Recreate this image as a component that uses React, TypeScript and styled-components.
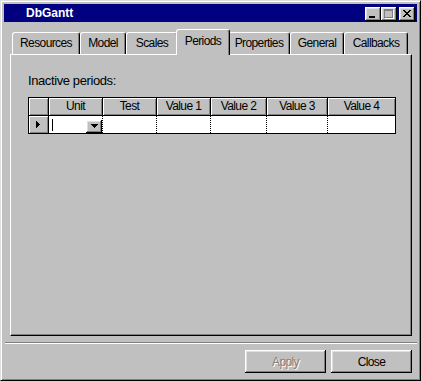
import React from "react";
import styled, { createGlobalStyle } from "styled-components";

const Global = createGlobalStyle`
  html, body { margin: 0; padding: 0; background: #c0c0c0; }
  body { font-family: "Liberation Sans", Arial, sans-serif; font-size: 11px; color: #000; }
  #root { width: 421px; height: 381px; }
`;

const Window = styled.div`
  box-sizing: border-box;
  width: 421px;
  height: 381px;
  background: #c0c0c0;
  border: 1px solid;
  border-color: #dfdfdf #000 #000 #dfdfdf;
  box-shadow: inset 1px 1px #fff, inset -1px -1px #808080;
  padding: 2px;
  display: flex;
  flex-direction: column;
`;

const TitleBar = styled.div`
  height: 18px;
  margin: 1px 1px 0 1px;
  background: #000080;
  display: flex;
  align-items: center;
  padding: 0 2px 0 22px;
`;

const TitleText = styled.div`
  flex: 1;
  color: #fff;
  font-weight: bold;
  font-size: 12px;
  line-height: 18px;
  letter-spacing: 0;
`;

const CaptionButtons = styled.div`
  display: flex;
  margin-top: 2px;
`;

const CaptionButton = styled.div<{ $gap?: boolean }>`
  width: 16px;
  height: 14px;
  margin-left: ${(p) => (p.$gap ? 2 : 0)}px;
  background: #c0c0c0;
  box-shadow: inset -1px -1px #000, inset 1px 1px #fff, inset -2px -2px #808080, inset 2px 2px #dfdfdf;
  display: flex;
  svg { display: block; }
`;

const Body = styled.div`
  margin: 7px 6px 0 7px;
  display: flex;
  flex-direction: column;
`;

const TabRow = styled.div`
  height: 25px;
  display: flex;
  align-items: flex-end;
  padding-left: 2px;
`;

const Tab = styled.div<{ $w: number; $active?: boolean }>`
  box-sizing: border-box;
  width: ${(p) => (p.$active ? p.$w + 4 : p.$w)}px;
  height: ${(p) => (p.$active ? 26 : 22)}px;
  margin: ${(p) => (p.$active ? "0 -2px -1px -2px" : "0")};
  border: 1px solid #fff;
  border-bottom: none;
  border-right-color: #000;
  border-radius: 3px 3px 0 0;
  box-shadow: inset -1px 0 #808080;
  background: #c0c0c0;
  position: relative;
  z-index: ${(p) => (p.$active ? 1 : 0)};
  text-align: center;
  padding-top: ${(p) => (p.$active ? 4 : 3)}px;
  font-size: 12px;
  line-height: 14px;
  letter-spacing: -0.6px;
  white-space: nowrap;
`;

const Panel = styled.div`
  box-sizing: border-box;
  height: 282px;
  border: 1px solid;
  border-color: #fff #000 #000 #fff;
  box-shadow: inset -1px -1px #808080;
  padding: 18px 17px;
  display: flex;
  flex-direction: column;
  align-items: flex-start;
`;

const Label = styled.div`
  font-size: 13px;
  line-height: 15px;
  letter-spacing: -0.4px;
  margin-bottom: 9px;
`;

const cols = "19px 53px 53px 53px 55px 60px 67px";

const Grid = styled.div`
  border: 1px solid #000;
  background: #000;
  display: flex;
  flex-direction: column;
  gap: 1px;
`;

const HeaderRow = styled.div`
  display: grid;
  grid-template-columns: ${cols};
  column-gap: 1px;
  height: 17px;
`;

const HeaderCell = styled.div`
  background: #c0c0c0;
  box-shadow: inset 1px 1px #fff, inset -1px -1px #808080;
  text-align: center;
  font-size: 12px;
  line-height: 16px;
  letter-spacing: -0.6px;
  white-space: nowrap;
`;

const DataRow = styled.div`
  display: grid;
  grid-template-columns: ${cols};
  column-gap: 1px;
  height: 17px;
  background: repeating-linear-gradient(to bottom, #000 0 1px, #fff 1px 2px);
`;

const IndicatorCell = styled.div`
  background: #c0c0c0;
  box-shadow: inset 1px 1px #fff, inset -1px -1px #808080, 1px 0 0 #000;
  display: flex;
  align-items: center;
  justify-content: center;
  padding-right: 1px;
  svg { display: block; }
`;

const EditCell = styled.div`
  background: #fff;
  display: flex;
  align-items: center;
  padding-left: 3px;
`;

const Caret = styled.div`
  width: 1px;
  height: 12px;
  background: #000;
  margin-top: 1px;
`;

const DropButton = styled.div`
  margin-left: auto;
  width: 16px;
  height: 13px;
  margin-top: 3px;
  background: #c0c0c0;
  box-shadow: inset -1px -1px #000, inset 1px 1px #fff, inset -2px -2px #808080, inset 2px 2px #dfdfdf;
  display: flex;
  align-items: center;
  justify-content: center;
  svg { display: block; }
`;

const DataCell = styled.div`
  background: #fff;
`;

const Separator = styled.div`
  height: 0;
  margin: 6px 1px 0 2px;
  border-top: 1px solid #808080;
  border-bottom: 1px solid #fff;
`;

const ButtonBar = styled.div`
  display: flex;
  justify-content: flex-end;
  gap: 5px;
  margin-top: 6px;
  padding-right: 6px;
`;

const PushButton = styled.div<{ $disabled?: boolean }>`
  width: 81px;
  height: 23px;
  background: #c0c0c0;
  box-shadow: inset -1px -1px #000, inset 1px 1px #fff, inset -2px -2px #808080, inset 2px 2px #dfdfdf;
  display: flex;
  align-items: center;
  justify-content: center;
  font-size: 12px;
  letter-spacing: -0.6px;
  color: ${(p) => (p.$disabled ? "#808080" : "#000")};
  text-shadow: ${(p) => (p.$disabled ? "1px 1px 0 #fff" : "none")};
`;

const MinIcon = () => (
  <svg width="16" height="14" shapeRendering="crispEdges">
    <rect x="4" y="9" width="6" height="2" fill="#000" />
  </svg>
);

const MaxIcon = () => (
  <svg width="16" height="14" shapeRendering="crispEdges">
    <path d="M4 3h9v1H4z M4 11h9v1H4z M12 3h1v9h-1z" fill="#fff" />
    <path d="M3 2h9v2H3z M3 10h9v1H3z M3 2h1v9H3z M11 2h1v9h-1z" fill="#808080" />
  </svg>
);

const CloseIcon = () => (
  <svg width="16" height="14" shapeRendering="crispEdges">
    <path
      d="M4 3h2v1H4z M10 3h2v1h-2z M5 4h2v1H5z M9 4h2v1H9z M6 5h4v1H6z M7 6h2v1H7z M6 7h4v1H6z M5 8h2v1H5z M9 8h2v1H9z M4 9h2v1H4z M10 9h2v1h-2z"
      fill="#000"
    />
  </svg>
);

const RowArrow = () => (
  <svg width="4" height="7" shapeRendering="crispEdges">
    <path d="M0 0h1v7H0z M1 1h1v5H1z M2 2h1v3H2z M3 3h1v1H3z" fill="#000" />
  </svg>
);

const DownArrow = () => (
  <svg width="7" height="4" shapeRendering="crispEdges">
    <path d="M0 0h7v1H0z M1 1h5v1H1z M2 2h3v1H2z M3 3h1v1H3z" fill="#000" />
  </svg>
);

const tabs = [
  { label: "Resources", w: 68 },
  { label: "Model", w: 46 },
  { label: "Scales", w: 52 },
  { label: "Periods", w: 50 },
  { label: "Properties", w: 62 },
  { label: "General", w: 54 },
  { label: "Callbacks", w: 64 },
];

const headers = ["", "Unit", "Test", "Value 1", "Value 2", "Value 3", "Value 4"];

export default function App() {
  return (
    <>
      <Global />
      <Window>
        <TitleBar>
          <TitleText>DbGantt</TitleText>
          <CaptionButtons>
            <CaptionButton>
              <MinIcon />
            </CaptionButton>
            <CaptionButton>
              <MaxIcon />
            </CaptionButton>
            <CaptionButton $gap>
              <CloseIcon />
            </CaptionButton>
          </CaptionButtons>
        </TitleBar>
        <Body>
          <TabRow>
            {tabs.map((t) => (
              <Tab key={t.label} $w={t.w} $active={t.label === "Periods"}>
                {t.label}
              </Tab>
            ))}
          </TabRow>
          <Panel>
            <Label>Inactive periods:</Label>
            <Grid>
              <HeaderRow>
                {headers.map((h, i) => (
                  <HeaderCell key={i}>{h}</HeaderCell>
                ))}
              </HeaderRow>
              <DataRow>
                <IndicatorCell>
                  <RowArrow />
                </IndicatorCell>
                <EditCell>
                  <Caret />
                  <DropButton>
                    <DownArrow />
                  </DropButton>
                </EditCell>
                <DataCell />
                <DataCell />
                <DataCell />
                <DataCell />
                <DataCell />
              </DataRow>
            </Grid>
          </Panel>
        </Body>
        <Separator />
        <ButtonBar>
          <PushButton $disabled>Apply</PushButton>
          <PushButton>Close</PushButton>
        </ButtonBar>
      </Window>
    </>
  );
}
